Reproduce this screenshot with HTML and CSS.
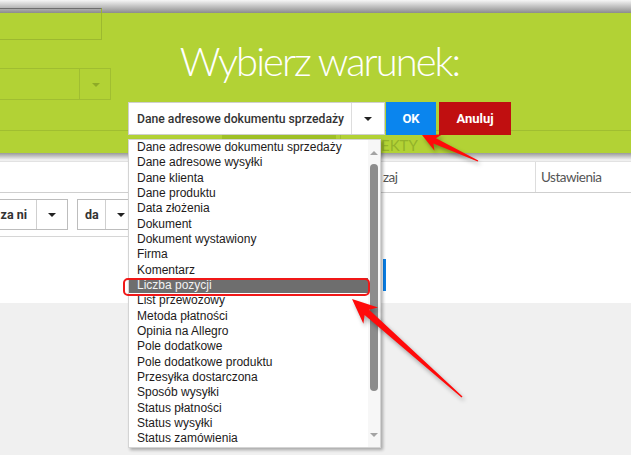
FILE: index.html
```html
<!DOCTYPE html>
<html lang="pl">
<head>
    <meta charset="UTF-8">
    <title>Wybierz warunek</title>
    <link rel="stylesheet" href="styles.css">
</head>
<body>

    <!-- Green modal header laid over the page -->
    <div class="overlay">
        <div class="topbar"></div>
        <div class="modal">
            <h1 class="modal-title">Wybierz warunek:</h1>
            <div class="controls">
                <div class="select-box">
                    <span class="select-value">Dane adresowe dokumentu sprzedaży</span>
                    <span class="select-arrow"><i class="caret"></i></span>
                </div>
                <button class="btn btn-ok">OK</button>
                <button class="btn btn-cancel">Anuluj</button>
            </div>
        </div>

        <!-- page elements seen through the green layer -->
        <div class="ghost ghost-input"></div>
        <div class="ghost ghost-select"><span class="ghost-split"></span><i class="ghost-caret"></i></div>
        <div class="ghost ghost-line"></div>
        <div class="ghost ghost-tab"></div>
        <div class="ghost ghost-tabsep"></div>
        <div class="ghost ghost-tabtext">EKTY</div>
    </div>
    <div class="shade"></div>

    <div class="page">
        <div class="table-head">
            <div class="th th-first"></div>
            <div class="th th-mid">zaj</div>
            <div class="th th-last">Ustawienia</div>
        </div>
        <div class="filters">
            <div class="filter filter-one">
                <span class="filter-value">za ni</span>
                <span class="filter-arrow"><i class="caret"></i></span>
            </div>
            <div class="filter filter-two">
                <span class="filter-value">da</span>
                <span class="filter-arrow"><i class="caret"></i></span>
            </div>
        </div>
        <div class="blue-edge"></div>
    </div>

    <!-- opened list of the select -->
    <div class="dropdown">
        <ul class="options">
            <li>Dane adresowe dokumentu sprzedaży</li>
            <li>Dane adresowe wysyłki</li>
            <li>Dane klienta</li>
            <li>Dane produktu</li>
            <li>Data złożenia</li>
            <li>Dokument</li>
            <li>Dokument wystawiony</li>
            <li>Firma</li>
            <li>Komentarz</li>
            <li class="selected">Liczba pozycji</li>
            <li>List przewozowy</li>
            <li>Metoda płatności</li>
            <li>Opinia na Allegro</li>
            <li>Pole dodatkowe</li>
            <li>Pole dodatkowe produktu</li>
            <li>Przesyłka dostarczona</li>
            <li>Sposób wysyłki</li>
            <li>Status płatności</li>
            <li>Status wysyłki</li>
            <li>Status zamówienia</li>
        </ul>
        <div class="scrollbar">
            <i class="scroll-up"></i>
            <div class="scroll-thumb"></div>
            <i class="scroll-down"></i>
        </div>
    </div>

    <!-- red annotations -->
    <div class="mark"></div>
    <svg class="arrows" width="631" height="455" viewBox="0 0 631 455">
        <polygon points="422,135 442,134.4 436,138.2 478.3,160.4 477.7,161.6 433.4,143.6 434.5,150.8"/>
        <polygon points="352,299 378,307.4 369.2,309.7 462.5,396.5 461.5,397.5 364.6,314.9 363.4,323.8"/>
    </svg>

</body>
</html>
```

FILE: styles.css
```css
/* Basic styling */
body {
    margin: 0;
    width: 631px;
    height: 455px;
    overflow: hidden;
    background-color: #f0f0f0;
    font-family: "Liberation Sans", Arial, sans-serif;
    position: relative;
}
.overlay {
    position: relative;
}
.topbar {
    height: 13px;
    background: linear-gradient(#f6f6f6, #8c8c8c);
}
.modal {
    height: 140px;
    background-color: #b2d235;
    display: flex;
    flex-direction: column;
    align-items: center;
    padding-left: 8px;
    box-sizing: border-box;
}
.modal-title {
    margin: 23px 0 0;
    font-family: Lato, sans-serif;
    font-weight: 300;
    font-size: 40px;
    letter-spacing: -2px;
    line-height: 50px;
    color: white;
    position: relative;
    z-index: 1;
}
.controls {
    display: flex;
    gap: 3px;
    margin-top: 16px;
    position: relative;
    z-index: 1;
}
.select-box {
    width: 257px;
    height: 33px;
    margin-right: -2px;
    box-sizing: border-box;
    background-color: white;
    border: 1px solid #cfcfcf;
    display: flex;
    align-items: center;
}
.select-value {
    flex-grow: 1;
    padding-left: 8px;
    font-family: Roboto, sans-serif;
    font-weight: 500;
    font-size: 12.2px;
    color: #333;
}
.select-arrow {
    width: 32px;
    height: 100%;
    border-left: 1px solid #ddd;
    display: flex;
    align-items: center;
    justify-content: center;
}
.caret {
    width: 0;
    height: 0;
    border-left: 4px solid transparent;
    border-right: 4px solid transparent;
    border-top: 4px solid #222;
}
.btn {
    height: 33px;
    border: none;
    color: white;
    font-family: Roboto, sans-serif;
    font-weight: 700;
    font-size: 13px;
    padding: 0;
}
.btn-ok {
    width: 50px;
    background-color: #0a85ee;
}
.btn-cancel {
    width: 72px;
    background-color: #c00f10;
}

/* page behind the green layer */
.ghost {
    position: absolute;
}
.ghost-input {
    left: -1px;
    top: 8px;
    width: 101px;
    height: 30px;
    border: 1px solid #9cb92f;
    border-top-color: #6e6e6e;
}
.ghost-select {
    left: -1px;
    top: 68px;
    width: 110px;
    height: 30px;
    border: 1px solid #a0be31;
}
.ghost-split {
    position: absolute;
    left: 79px;
    top: 0;
    bottom: 0;
    border-left: 1px solid #a0be31;
}
.ghost-caret {
    position: absolute;
    left: 92px;
    top: 14px;
    border-left: 4px solid transparent;
    border-right: 4px solid transparent;
    border-top: 4px solid #8eab27;
}
.ghost-line {
    left: 0;
    right: 0;
    top: 130px;
    border-top: 1px solid #a0be31;
}
.ghost-tab {
    left: 222px;
    top: 131px;
    width: 114px;
    height: 22px;
    background-color: #9fc125;
}
.ghost-tabsep {
    left: 340px;
    top: 131px;
    height: 22px;
    border-left: 1px solid #a0be31;
}
.ghost-tabtext {
    left: 381px;
    top: 136px;
    font-family: Lato, sans-serif;
    font-size: 15px;
    color: #93b22a;
}
.shade {
    height: 7px;
    background: linear-gradient(#9a9a9a, #f4f4f4);
}

/* white page area */
.page {
    height: 142px;
    background-color: white;
    position: relative;
}
.table-head {
    display: flex;
    height: 30px;
    border-top: 1px solid #e2e2e2;
    border-bottom: 1px solid #cfcfcf;
    margin-top: 1px;
    font-family: Lato, sans-serif;
    font-size: 13.5px;
    letter-spacing: -0.5px;
    color: #555;
}
.th {
    display: flex;
    align-items: center;
}
.th-first {
    width: 383px;
}
.th-mid {
    width: 152px;
}
.th-last {
    flex-grow: 1;
    border-left: 1px solid #ddd;
    padding-left: 5px;
}
.filters {
    display: flex;
    gap: 9px;
    width: 140px;
    padding: 6px 0 6px;
    border-bottom: 1px solid #d6d6d6;
}
.filter {
    height: 31px;
    box-sizing: border-box;
    border: 1px solid #bdbdbd;
    display: flex;
    font-family: Roboto, sans-serif;
    font-weight: 700;
    font-size: 12.5px;
    color: #333;
}
.filter-one {
    margin-left: -1px;
    width: 69px;
}
.filter-two {
    width: 70px;
}
.filter-value {
    display: flex;
    align-items: center;
    overflow: hidden;
}
.filter-one .filter-value {
    width: 36px;
    justify-content: flex-end;
    padding-right: 9px;
    box-sizing: border-box;
}
.filter-two .filter-value {
    width: 27px;
    padding-left: 7px;
    box-sizing: border-box;
}
.filter-arrow {
    width: 30px;
    border-left: 1px solid #cfcfcf;
    display: flex;
    align-items: center;
    justify-content: center;
}
.blue-edge {
    position: absolute;
    left: 383px;
    top: 98px;
    width: 3px;
    height: 32px;
    background-color: #0a7fe6;
}

/* dropdown list */
.dropdown {
    position: absolute;
    left: 128px;
    top: 139px;
    width: 253px;
    height: 309px;
    box-sizing: border-box;
    background-color: white;
    border: 1px solid #d4d4d4;
    box-shadow: 2px 2px 3px rgba(0, 0, 0, 0.3);
    display: flex;
}
.options {
    list-style: none;
    margin: 0;
    padding: 0;
    flex-grow: 1;
    font-size: 12px;
    line-height: 15.33px;
    color: #221a1a;
}
.options li {
    padding-left: 8px;
    white-space: nowrap;
}
.options li.selected {
    background-color: #6e6e6e;
    color: #f2f2f2;
}
.scrollbar {
    width: 12px;
    background-color: #f7f7f7;
    position: relative;
}
.scroll-thumb {
    position: absolute;
    left: 2px;
    top: 24px;
    width: 8px;
    height: 227px;
    border-radius: 4px;
    background-color: #8c8c8c;
}
.scroll-up,
.scroll-down {
    position: absolute;
    left: 2px;
    border-left: 4px solid transparent;
    border-right: 4px solid transparent;
}
.scroll-up {
    top: 11px;
    border-bottom: 4px solid #a3a3a3;
}
.scroll-down {
    top: 293px;
    border-top: 4px solid #a3a3a3;
}

/* annotations */
.mark {
    position: absolute;
    left: 123px;
    top: 278px;
    width: 247px;
    height: 18px;
    box-sizing: border-box;
    border: 2px solid #f01818;
    border-radius: 5px;
}
.arrows {
    position: absolute;
    left: 0;
    top: 0;
    fill: #ff0a0a;
    filter: drop-shadow(2px 3px 2px rgba(0, 0, 0, 0.35));
}
```
